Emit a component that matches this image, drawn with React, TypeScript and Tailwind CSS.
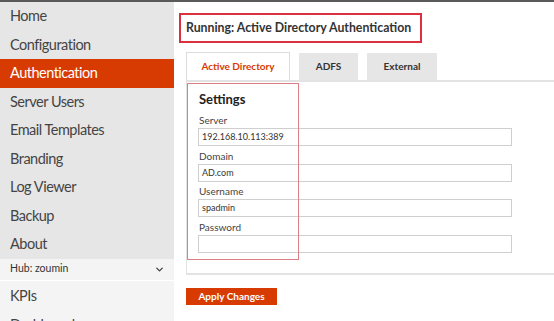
import { ChevronDown } from 'lucide-react';

const navItems = ['Home', 'Configuration', 'Authentication', 'Server Users', 'Email Templates', 'Branding', 'Log Viewer', 'Backup', 'About'];

const fields = [
  { label: 'Server', value: '192.168.10.113:389' },
  { label: 'Domain', value: 'AD.com' },
  { label: 'Username', value: 'spadmin' },
  { label: 'Password', value: '' },
];

const App = () => {
  return (
    <div className="w-[554px] h-[321px] overflow-hidden bg-white flex flex-col font-['Lato','Open_Sans',sans-serif] text-[#333]">
      <div className="h-[2px] bg-[#5a5a5a] shrink-0" />
      <div className="flex flex-1 min-h-0">
        {/* sidebar */}
        <div className="w-[174px] shrink-0 flex flex-col bg-[#f4f4f4]">
          <div className="bg-[#e6e6e6] shrink-0">
            {navItems.map((item) => (
              <div
                key={item}
                className={`h-[28.5px] flex items-center pl-[10px] text-[14.5px] tracking-[-0.5px] ${
                  item === 'Authentication' ? 'bg-[#d83b01] text-white' : 'text-[#444]'
                }`}
              >
                {item}
              </div>
            ))}
          </div>
          <div className="h-[22.5px] shrink-0 flex items-center justify-between pl-[10px] pr-[9px] text-[10.5px] text-[#333] border-b border-white">
            <span>Hub: zoumin</span>
            <ChevronDown size={11} strokeWidth={3} className="text-[#444]" />
          </div>
          <div className="h-[29px] shrink-0 flex items-center pl-[10px] text-[14.5px] tracking-[-0.5px] text-[#444]">KPIs</div>
          <div className="h-[29px] shrink-0 flex items-center pl-[10px] text-[14.5px] tracking-[-0.5px] text-[#444]">Dashboards</div>
        </div>

        {/* main */}
        <div className="flex-1 flex flex-col">
          <div className="mt-[11px] ml-[5px] w-[243px] h-[30px] border-2 border-[#d9323e] flex items-center pl-[5px] text-[12.3px] font-bold text-[#333] whitespace-nowrap">
            Running: Active Directory Authentication
          </div>

          <div className="mt-[9px] ml-[12px] flex items-end gap-[9px] h-[28px]">
            <div className="w-[104px] h-[28px] bg-white border border-b-0 border-[#dcdcdc] flex items-center justify-center text-[10px] font-bold text-[#d83b01]">
              Active Directory
            </div>
            <div className="w-[59px] h-[27px] bg-[#e6e6e6] flex items-center justify-center text-[10px] font-bold text-[#333]">ADFS</div>
            <div className="w-[70px] h-[27px] bg-[#e6e6e6] flex items-center justify-center text-[10px] font-bold text-[#333]">External</div>
          </div>

          <div className="relative ml-[12px] h-[195px] border-t-2 border-l border-b-2 border-[#e3e3e3] pl-[11px] pt-[8px]">
            <div className="text-[13px] font-bold text-[#222] pl-[1px] h-[20px] flex items-center">Settings</div>
            <div className="flex flex-col mt-[5px] gap-[4.5px]">
              {fields.map((f) => (
                <div key={f.label} className="flex flex-col">
                  <div className="text-[10px] leading-[11px] text-[#444] pl-[1px]">{f.label}</div>
                  <div className="mt-[2px] w-[314px] h-[18px] border border-[#cfcfcf] bg-white flex items-center pl-[3px] text-[9px] text-[#333]">
                    {f.value}
                  </div>
                </div>
              ))}
            </div>
            {/* annotation box */}
            <div className="absolute left-[0px] top-[1px] w-[112px] h-[177px] border border-[#dd7f86] pointer-events-none" />
          </div>

          <button className="mt-[13px] ml-[12px] w-[91px] h-[17px] bg-[#d83b01] text-white text-[10px] font-bold flex items-center justify-center">
            Apply Changes
          </button>
        </div>
      </div>
    </div>
  );
};

export default App;
